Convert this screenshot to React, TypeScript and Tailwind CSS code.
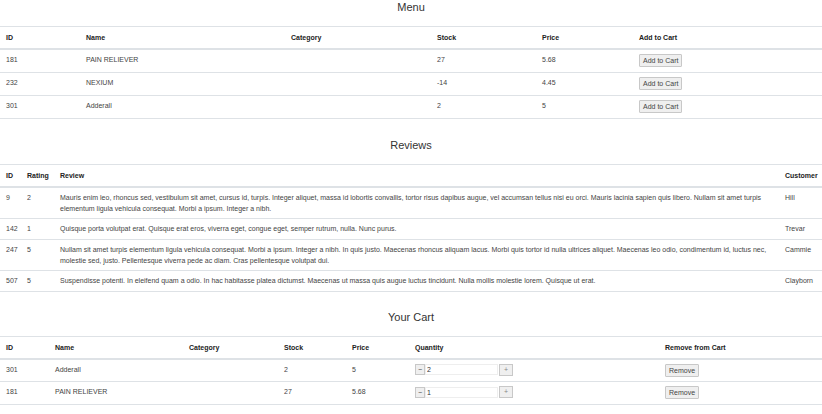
import React from "react";

const menu = [
  { id: 181, name: "PAIN RELIEVER", category: "", stock: 27, price: 5.68 },
  { id: 232, name: "NEXIUM", category: "", stock: -14, price: 4.45 },
  { id: 301, name: "Adderall", category: "", stock: 2, price: 5 },
];

const reviews = [
  {
    id: 9,
    rating: 2,
    text: "Mauris enim leo, rhoncus sed, vestibulum sit amet, cursus id, turpis. Integer aliquet, massa id lobortis convallis, tortor risus dapibus augue, vel accumsan tellus nisi eu orci. Mauris lacinia sapien quis libero. Nullam sit amet turpis elementum ligula vehicula consequat. Morbi a ipsum. Integer a nibh.",
    customer: "Hill",
  },
  {
    id: 142,
    rating: 1,
    text: "Quisque porta volutpat erat. Quisque erat eros, viverra eget, congue eget, semper rutrum, nulla. Nunc purus.",
    customer: "Trevar",
  },
  {
    id: 247,
    rating: 5,
    text: "Nullam sit amet turpis elementum ligula vehicula consequat. Morbi a ipsum. Integer a nibh. In quis justo. Maecenas rhoncus aliquam lacus. Morbi quis tortor id nulla ultrices aliquet. Maecenas leo odio, condimentum id, luctus nec, molestie sed, justo. Pellentesque viverra pede ac diam. Cras pellentesque volutpat dui.",
    customer: "Cammie",
  },
  {
    id: 507,
    rating: 5,
    text: "Suspendisse potenti. In eleifend quam a odio. In hac habitasse platea dictumst. Maecenas ut massa quis augue luctus tincidunt. Nulla mollis molestie lorem. Quisque ut erat.",
    customer: "Clayborn",
  },
];

const cart = [
  { id: 301, name: "Adderall", category: "", stock: 2, price: 5, qty: 2 },
  { id: 181, name: "PAIN RELIEVER", category: "", stock: 27, price: 5.68, qty: 1 },
];

function Title({ children }: { children: React.ReactNode }) {
  return <h2 className="text-center text-[11px] leading-[14px] text-[#333] pb-[12px]">{children}</h2>;
}

function SmallButton({ children }: { children: React.ReactNode }) {
  return (
    <button className="h-[13px] px-[3px] text-[7px] leading-[11px] text-[#444] bg-[#efefef] border border-[#c8c8c8] rounded-[1px]">
      {children}
    </button>
  );
}

const th = "text-left font-bold text-[#222] px-[6px] pt-[5px] pb-[5px] border-t border-b-2 border-[#dee2e6] align-bottom";
const td = "px-[6px] py-[4px] border-b border-[#dee2e6] align-top";
const tdr = "px-[6px] pt-[4px] pb-[4.5px] border-b border-[#dee2e6] align-top";

export default function App() {
  return (
    <div className="w-[822px] bg-white text-[7px] leading-[11px] text-[#444]" style={{ fontFamily: '"Liberation Sans", Arial, sans-serif' }}>
      <Title>Menu</Title>
      <table className="w-full table-fixed border-collapse">
        <thead>
          <tr>
            <th className={`${th} w-[80px]`}>ID</th>
            <th className={`${th} w-[205px]`}>Name</th>
            <th className={`${th} w-[146px]`}>Category</th>
            <th className={`${th} w-[105px]`}>Stock</th>
            <th className={`${th} w-[97px]`}>Price</th>
            <th className={th}>Add to Cart</th>
          </tr>
        </thead>
        <tbody>
          {menu.map((m) => (
            <tr key={m.id} className="h-[23px]">
              <td className={`${td} align-middle`}>{m.id}</td>
              <td className={`${td} align-middle`}>{m.name}</td>
              <td className={`${td} align-middle`}>{m.category}</td>
              <td className={`${td} align-middle`}>{m.stock}</td>
              <td className={`${td} align-middle`}>{m.price}</td>
              <td className={`${td} align-middle`}>
                <SmallButton>Add to Cart</SmallButton>
              </td>
            </tr>
          ))}
        </tbody>
      </table>

      <div className="pt-[19px]">
        <Title>Reviews</Title>
      </div>
      <table className="w-full table-fixed border-collapse">
        <thead>
          <tr>
            <th className={`${th} w-[21px]`}>ID</th>
            <th className={`${th} w-[33px]`}>Rating</th>
            <th className={th}>Review</th>
            <th className={`${th} w-[43px]`}>Customer</th>
          </tr>
        </thead>
        <tbody>
          {reviews.map((r) => (
            <tr key={r.id}>
              <td className={tdr}>{r.id}</td>
              <td className={tdr}>{r.rating}</td>
              <td className={tdr}>{r.text}</td>
              <td className={tdr}>{r.customer}</td>
            </tr>
          ))}
        </tbody>
      </table>

      <div className="pt-[18px]">
        <Title>Your Cart</Title>
      </div>
      <table className="w-full table-fixed border-collapse">
        <thead>
          <tr>
            <th className={`${th} w-[49px]`}>ID</th>
            <th className={`${th} w-[134px]`}>Name</th>
            <th className={`${th} w-[95px]`}>Category</th>
            <th className={`${th} w-[68px]`}>Stock</th>
            <th className={`${th} w-[63px]`}>Price</th>
            <th className={`${th} w-[250px]`}>Quantity</th>
            <th className={th}>Remove from Cart</th>
          </tr>
        </thead>
        <tbody>
          {cart.map((c) => (
            <tr key={c.id} className="h-[23px]">
              <td className={`${td} align-middle`}>{c.id}</td>
              <td className={`${td} align-middle`}>{c.name}</td>
              <td className={`${td} align-middle`}>{c.category}</td>
              <td className={`${td} align-middle`}>{c.stock}</td>
              <td className={`${td} align-middle`}>{c.price}</td>
              <td className={`${td} align-middle`}>
                <div className="flex items-center">
                  <button className="w-[10px] h-[11px] text-[7px] leading-[9px] bg-[#efefef] border border-[#c8c8c8]">−</button>
                  <input
                    readOnly
                    value={c.qty}
                    className="w-[73px] h-[11px] px-[1px] text-[7px] text-[#333] border border-[#eee] outline-none"
                  />
                  <button className="ml-[1px] w-[14px] h-[12px] text-[7px] leading-[10px] text-[#888] bg-[#efefef] border border-[#c8c8c8]">+</button>
                </div>
              </td>
              <td className={`${td} align-middle`}>
                <SmallButton>Remove</SmallButton>
              </td>
            </tr>
          ))}
        </tbody>
      </table>
    </div>
  );
}
